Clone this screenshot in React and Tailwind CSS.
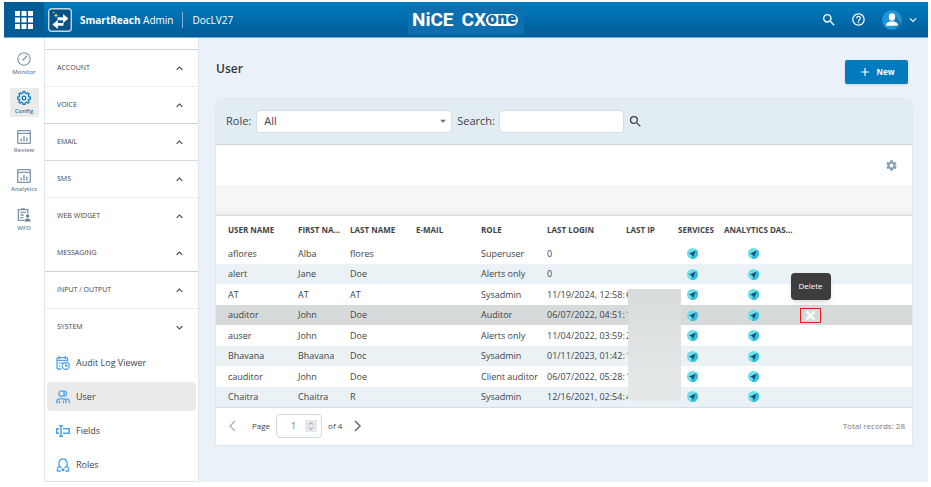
import { useState } from "react";
import {
  MdSearch,
  MdHelpOutline,
  MdSettings,
  MdArrowDropDown,
  MdExpandMore,
  MdExpandLess,
  MdAdd,
} from "react-icons/md";

const sections = [
  { name: "ACCOUNT", line: "border-[#c9d6dc]" },
  { name: "VOICE", line: "border-[#eeeeee]" },
  { name: "EMAIL", line: "border-[#c9d6dc]" },
  { name: "SMS", line: "border-[#d3e0e4]" },
  { name: "WEB WIDGET", line: "border-[#eeeeee]" },
  { name: "MESSAGING", line: "border-white" },
  { name: "INPUT / OUTPUT", line: "border-[#c5d0d8]" },
  { name: "SYSTEM", line: "border-[#eeeeee]", open: true },
];

const users = [
  { user: "aflores", first: "Alba", last: "flores", role: "Superuser", login: "0", ip: "" },
  { user: "alert", first: "Jane", last: "Doe", role: "Alerts only", login: "0", ip: "" },
  { user: "AT", first: "AT", last: "AT", role: "Sysadmin", login: "11/19/2024, 12:58:1", ip: "6" },
  { user: "auditor", first: "John", last: "Doe", role: "Auditor", login: "06/07/2022, 04:51:2", ip: "1" },
  { user: "auser", first: "John", last: "Doe", role: "Alerts only", login: "11/04/2022, 03:59:0", ip: "2" },
  { user: "Bhavana", first: "Bhavana", last: "Doc", role: "Sysadmin", login: "01/11/2023, 01:42:0", ip: "1" },
  { user: "cauditor", first: "John", last: "Doe", role: "Client auditor", login: "06/07/2022, 05:28:1", ip: "1" },
  { user: "Chaitra", first: "Chaitra", last: "R", role: "Sysadmin", login: "12/16/2021, 02:54:4", ip: "4" },
];

function AppsIcon() {
  return (
    <svg width="18" height="18" viewBox="0 0 18 18" fill="#fff">
      {[0, 6.5, 13].map((y) =>
        [0, 6.5, 13].map((x) => (
          <rect key={`${x}-${y}`} x={x} y={y} width="5" height="5" />
        ))
      )}
    </svg>
  );
}

function SmartReachIcon() {
  return (
    <svg width="24" height="24" viewBox="0 0 24 24">
      <rect x="0.7" y="0.7" width="22.6" height="22.6" rx="3" fill="#0b5384" stroke="#bcd7e8" strokeWidth="1.4" />
      <path d="M9.500 9.200h5.500V6l5.400 4.600-5.400 4.600v-3H9.500z" fill="#fff" />
      <path d="M15.500 17.800H9.800V21L4.400 16.400 9.800 12v3h5.700z" fill="#fff" />
      <path d="M8 5l.7 1.700 1.700.7-1.700.7L8 9.800l-.7-1.700-1.700-.7 1.700-.7z" fill="#f0d84a" />
      <circle cx="5.600" cy="4.500" r=".8" fill="#f0d84a" />
    </svg>
  );
}

function MonitorIcon() {
  return (
    <svg width="14" height="14" viewBox="0 0 14 14" fill="none" stroke="#8195a3" strokeWidth="1.1">
      <circle cx="7" cy="7" r="6.2" />
      <path d="M6.2 7.8l3.4-3.6" strokeWidth="1.3" strokeLinecap="round" />
      <circle cx="6.2" cy="7.8" r=".8" fill="#8195a3" stroke="none" />
      <path d="M7 2.4v1M2.4 7h1M10.6 7h1M3.8 3.8l.6.6" strokeWidth=".7" />
    </svg>
  );
}

// eight teeth, each one given by its two base and two tip corners
const gearPoints = Array.from({ length: 8 }, (_, i) =>
  [
    [-15, 8.4],
    [-9, 11],
    [9, 11],
    [15, 8.4],
  ].map(([offset, radius]) => {
    const angle = ((i * 45 + offset) * Math.PI) / 180;
    return `${12 + radius * Math.cos(angle)},${12 + radius * Math.sin(angle)}`;
  })
)
  .flat()
  .join(" ");

function ConfigIcon() {
  return (
    <svg width="14" height="14" viewBox="0 0 24 24" fill="none" stroke="#0d7fc0" strokeWidth="2.2" strokeLinejoin="round">
      <polygon points={gearPoints} />
      <circle cx="12" cy="12" r="3.200" />
    </svg>
  );
}

function ReportIcon() {
  return (
    <svg width="14" height="14" viewBox="0 0 14 14" fill="none" stroke="#7f95a8" strokeWidth="1.3">
      <rect x=".7" y=".7" width="12.6" height="12.6" rx=".6" />
      <path d="M.6 3.400h12.800" />
      <path d="M4.200 11.400V8.600M7 11.400V6M9.800 11.400V7.600" strokeWidth="1.400" />
    </svg>
  );
}

function WfoIcon() {
  return (
    <svg width="14" height="14" viewBox="0 0 14 14" fill="none" stroke="#7f95a8" strokeWidth="1.3">
      <path d="M7.4 12.4H1.4V1.6h9.4v4" />
      <path d="M3.4 4.4h5.4M3.4 7h3.4M3.4 9.6h3M4.2.8h3.8" />
      <circle cx="10.6" cy="8" r="1.8" fill="#6d8599" stroke="none" />
      <path d="M7.6 13.6c0-2.4 1.2-3 3-3s3 .6 3 3z" fill="#6d8599" stroke="none" />
    </svg>
  );
}

function AuditIcon() {
  return (
    <svg width="14" height="14" viewBox="0 0 14 14" fill="none" stroke="#4da3ec" strokeWidth="1.3" strokeLinecap="round">
      <path d="M5 13H2a1 1 0 0 1-1-1V2.600a1 1 0 0 1 1-1h8.600a1 1 0 0 1 1 1v2.200M1 4.400h10.600M3.400.6v2M9.200.6v2M3.200 7h.6M3.200 9.800h.6M5.600 7h1" />
      <circle cx="9.800" cy="9.800" r="3.500" />
      <path d="M9.800 8v2h1.400" />
    </svg>
  );
}

function UsersIcon() {
  return (
    <svg width="14" height="14" viewBox="0 0 14 14" fill="none" stroke="#4da3ec" strokeWidth="1.3" strokeLinecap="round">
      <circle cx="5.600" cy="3.600" r="2.700" />
      <path d="M8.600 1a2.700 2.700 0 0 1 0 5.200M.8 12.800v-1.400c0-1.800 1.400-2.600 3-2.600h3.200c1.600 0 3 .8 3 2.600v1.400M3.400 12.800v-1.600M7.400 12.800v-1.600M10.600 8.800c1.700.1 2.800 1 2.800 2.600v1.200" />
    </svg>
  );
}

function FieldsIcon() {
  return (
    <svg width="14" height="12" viewBox="0 0 14 12" fill="none" stroke="#4da3ec" strokeWidth="1.5">
      <path d="M5 .8v10.400M3 .8h4M3 11.200h4M3.200 3.800H.8v4.400h2.400M7 3.800h6.200v4.400H7" />
    </svg>
  );
}

function RolesIcon() {
  return (
    <svg width="14" height="14" viewBox="0 0 14 14" fill="none" stroke="#4da3ec" strokeWidth="1.3" strokeLinecap="round" strokeLinejoin="round">
      <path d="M4.200 13H1.400c-.4-2.600 0-3.800 2.200-4.800C2.200 6.400 2.600.8 7 .8s4.800 5.600 3.400 7.400c2.200 1 2.600 2.200 2.200 4.800H9.800M3.600 8.200l1.600 1.600M10.400 8.200L8.800 9.800" />
      <path d="M7 9.800l.6 1.200 1.300.2-.9.9.2 1.300L7 12.800l-1.200.6.2-1.300-.9-.9 1.300-.2z" fill="#3a93e0" stroke="none" />
    </svg>
  );
}

function AvatarIcon() {
  return (
    <svg width="20" height="20" viewBox="0 0 20 20">
      <circle cx="10" cy="10" r="10" fill="#2394d4" />
      <path d="M12.600 5.500L19.400 12.500A10 10 0 0 1 15.500 18.300L12 16z" fill="#1479b8" />
      <ellipse cx="10" cy="7" rx="3.200" ry="3.700" fill="#fff" />
      <path d="M4 15.800c0-3 2.200-3.800 4.200-4.200h3.600c2 .4 4.200 1.200 4.200 4.200z" fill="#fff" />
    </svg>
  );
}

function PlaneIcon() {
  return (
    <svg className="block" width="11" height="11" viewBox="0 0 11 11">
      <circle cx="5.500" cy="5.500" r="5.500" fill="#6be0ea" />
      <path d="M9.400 1.600A5.500 5.500 0 0 1 4 10.800L5 6z" fill="#35c0d8" />
      <path d="M8.600 2.400L1.900 5.800l2.500.6L6 9z" fill="#17497f" />
    </svg>
  );
}

const railItems = [
  { name: "Monitor", Icon: MonitorIcon },
  { name: "Config", Icon: ConfigIcon },
  { name: "Review", Icon: ReportIcon },
  { name: "Analytics", Icon: ReportIcon },
  { name: "WFO", Icon: WfoIcon },
];

const systemLinks = [
  { name: "Audit Log Viewer", Icon: AuditIcon },
  { name: "User", Icon: UsersIcon },
  { name: "Fields", Icon: FieldsIcon },
  { name: "Roles", Icon: RolesIcon },
];

function Header() {
  return (
    <header className="flex h-9 items-center border-b border-[#6fa9cf] bg-linear-to-b from-[#007cbe] to-[#005c99] text-white">
      <div className="flex h-full flex-1 items-center">
        <button className="flex h-full w-10 items-center justify-center bg-[#005b97]" aria-label="Applications">
          <AppsIcon />
        </button>
        <div className="pl-1">
          <SmartReachIcon />
        </div>
        <p className="ml-2 text-[10px] leading-4">
          <strong className="font-bold">SmartReach</strong> Admin
        </p>
        <span className="mx-[9px] h-4 w-px bg-[#7fb4d6]" />
        <p className="text-[10px] leading-4">DocLV27</p>
      </div>
      <div className="flex h-7 w-[116px] items-center bg-[#0f6fae] pl-1 font-['Roboto',sans-serif] text-[19px] leading-none font-bold">
        <span>NiCE</span>
        <span className="ml-2">CX</span>
        <span className="flex h-3 w-8 items-center justify-center rounded-full bg-white font-['Open_Sans',sans-serif] text-[15px] leading-3 font-extrabold text-[#0a69a8]">
          <span className="pb-[3px]">one</span>
        </span>
      </div>
      <div className="flex flex-1 items-center justify-end">
        <button aria-label="Search">
          <MdSearch size={16} />
        </button>
        <button className="ml-3.5" aria-label="Help">
          <MdHelpOutline size={15} />
        </button>
        <button className="mr-2 ml-4 flex items-center gap-1" aria-label="Account">
          <AvatarIcon />
          <MdExpandMore size={14} />
        </button>
      </div>
    </header>
  );
}

function Rail() {
  return (
    <nav className="flex w-10 shrink-0 flex-col items-center gap-2.5 pt-[11px]">
      {railItems.map(({ name, Icon }) => (
        <a
          key={name}
          href="#"
          className={
            name === "Config"
              ? "flex h-[29px] w-[29px] flex-col items-center justify-between rounded-xs bg-[#ebebeb] pt-[3px] pb-[2px] text-[6px] leading-[8px] font-semibold text-[#0d7fc0]"
              : "flex h-[29px] w-[29px] flex-col items-center justify-between pt-[3px] pb-[2px] text-[6px] leading-[8px] font-semibold text-[#6f869c]"
          }
        >
          <Icon />
          {name}
        </a>
      ))}
    </nav>
  );
}

function Sidebar() {
  return (
    <nav className="w-[155px] shrink-0 border-x border-b border-[#dfe5e9] bg-white pt-[11px] text-[#3f4347]">
      {sections.map((section) => (
        <button
          key={section.name}
          className={`flex h-[37px] w-full items-center justify-between border-t pr-3 pl-3 text-[7px] ${section.line}`}
        >
          {section.name}
          {section.open ? <MdExpandMore size={13} /> : <MdExpandLess size={13} />}
        </button>
      ))}
      <ul className="flex flex-col gap-[5px] px-0.5 pt-[3px] pb-0.5">
        {systemLinks.map(({ name, Icon }) => (
          <li key={name}>
            <a
              href="#"
              className={
                name === "User"
                  ? "flex h-[29px] items-center gap-[6px] rounded-sm bg-[#eaeaea] pl-[9px] text-[9px]"
                  : "flex h-[29px] items-center gap-[6px] pl-[9px] text-[9px]"
              }
            >
              <Icon />
              {name}
            </a>
          </li>
        ))}
      </ul>
    </nav>
  );
}

function Filters() {
  return (
    <form className="flex h-[46px] items-center rounded-t-lg border-b border-[#c8d6dd] bg-[#e2edf3] pl-2.5 text-[11px] text-[#3f4347]">
      <label htmlFor="role">Role:</label>
      <div className="relative ml-[5px]">
        <select
          id="role"
          className="h-[23px] w-[196px] appearance-none rounded-sm border border-[#d5e0e6] bg-white pl-[7px] text-[11px]"
        >
          <option>All</option>
        </select>
        <MdArrowDropDown size={14} className="pointer-events-none absolute top-1 right-0.5 text-[#6b7075]" />
      </div>
      <label htmlFor="search" className="ml-[5px]">
        Search:
      </label>
      <input
        id="search"
        type="text"
        className="ml-1 h-[23px] w-[125px] rounded-sm border border-[#d5e0e6] bg-white px-1"
      />
      <button type="button" className="ml-1" aria-label="Run search">
        <MdSearch size={15} />
      </button>
    </form>
  );
}

function UserRow({ row, selected }) {
  return (
    <tr
      className={
        selected
          ? "bg-[#d7dadb] odd:h-[21px] even:h-5"
          : "odd:h-[21px] odd:bg-white even:h-5 even:bg-[#eaf2f6]"
      }
    >
      <td className="pl-3">{row.user}</td>
      <td>{row.first}</td>
      <td>{row.last}</td>
      <td></td>
      <td className="whitespace-nowrap">{row.role}</td>
      <td>
        <div className="w-[78px] overflow-hidden whitespace-nowrap">{row.login}</div>
      </td>
      <td className="relative">
        {row.ip}
        {row.user === "AT" && (
          <div className="absolute top-[5px] left-0.5 z-10 h-28 w-[53px] bg-linear-to-b from-[#d9dcdc] to-[#e5e9ea]" />
        )}
      </td>
      <td className="pl-[9px]">
        <PlaneIcon />
      </td>
      <td className="pl-6">
        <PlaneIcon />
      </td>
      <td>
        {selected && (
          <button
            className="relative ml-0.5 flex h-[15px] w-[21px] items-center justify-center border border-[#f01818] text-white"
            aria-label="Delete user"
          >
            <svg width="11" height="11" viewBox="0 0 11 11" stroke="currentColor" strokeWidth="2.400">
              <path d="M1.500 1.500l8 8M9.500 1.500l-8 8" />
            </svg>
            <span
              role="tooltip"
              className="absolute bottom-[22px] left-1/2 flex h-[27px] w-10 -translate-x-1/2 items-center justify-center rounded-sm bg-[#3d3d3d] text-[8px] shadow-md"
            >
              Delete
            </span>
          </button>
        )}
      </td>
    </tr>
  );
}

function UserTable() {
  return (
    <table className="w-full table-fixed border-b border-[#d3e0e6] bg-white text-left text-[9px] leading-4 text-[#404448]">
      <colgroup>
        <col className="w-[82px]" />
        <col className="w-[52px]" />
        <col className="w-[66px]" />
        <col className="w-[65px]" />
        <col className="w-[66px]" />
        <col className="w-[79px]" />
        <col className="w-[52px]" />
        <col className="w-[46px]" />
        <col className="w-[74px]" />
        <col />
      </colgroup>
      <thead>
        <tr className="h-[27px] text-[8px] whitespace-nowrap">
          <th className="pl-3 font-bold">USER NAME</th>
          <th className="font-bold">FIRST NA...</th>
          <th className="font-bold">LAST NAME</th>
          <th className="font-bold">E-MAIL</th>
          <th className="font-bold">ROLE</th>
          <th className="font-bold">LAST LOGIN</th>
          <th className="font-bold">LAST IP</th>
          <th className="font-bold">SERVICES</th>
          <th className="font-bold">ANALYTICS DAS...</th>
          <th></th>
        </tr>
      </thead>
      <tbody>
        {users.map((row) => (
          <UserRow key={row.user} row={row} selected={row.user === "auditor"} />
        ))}
      </tbody>
    </table>
  );
}

function Pagination() {
  const [page, setPage] = useState(1);

  return (
    <div className="flex h-[37px] items-center bg-white pr-[7px] pl-3 text-[8px] text-[#404448]">
      <button aria-label="Previous page" onClick={() => setPage(Math.max(1, page - 1))}>
        <svg width="9" height="12" viewBox="0 0 9 12" fill="none" stroke="#a9adb0" strokeWidth="1.2">
          <path d="M7 1L2 6l5 5" />
        </svg>
      </button>
      <label htmlFor="page" className="ml-[15px]">
        Page
      </label>
      <div className="ml-[6px] flex h-6 w-[46px] items-center justify-between rounded-sm border border-[#ccd9e6] pr-1">
        <input
          id="page"
          type="text"
          inputMode="numeric"
          value={page}
          onChange={(e) => setPage(Number(e.target.value) || 1)}
          className="w-6 pl-3.5 text-[9px] text-[#5b7286] outline-none"
        />
        <svg width="12" height="12" viewBox="0 0 12 12" fill="none" stroke="#8b8f94">
          <rect width="12" height="12" fill="#e8e8ec" stroke="none" />
          <path d="M4 4.500l2-2 2 2M4 7.500l2 2 2-2" />
        </svg>
      </div>
      <span className="ml-[6px]">of 4</span>
      <button className="ml-[11px]" aria-label="Next page" onClick={() => setPage(Math.min(4, page + 1))}>
        <svg width="9" height="12" viewBox="0 0 9 12" fill="none" stroke="#6b6f73" strokeWidth="1.600">
          <path d="M2 1l5 5-5 5" />
        </svg>
      </button>
      <span className="ml-auto text-[#777b7f]">Total records: 28</span>
    </div>
  );
}

export default function App() {
  return (
    <div className="bg-white pt-0.5 pr-[3px] pb-[5px] pl-1 font-['Open_Sans','Noto_Sans',sans-serif]">
      <Header />
      <div className="flex">
        <Rail />
        <Sidebar />
        <main className="min-w-0 flex-1 bg-[#eaf1f9] pr-4 pl-[17px]">
          <div className="flex items-start justify-between pt-[22px] pr-1">
            <h1 className="text-[12px] leading-[18px] font-semibold text-[#33373b]">User</h1>
            <button className="flex h-6 w-[63px] items-center justify-center gap-1 rounded-xs bg-[#007cbe] text-[8px] font-bold text-white shadow-sm">
              <MdAdd size={14} />
              New
            </button>
          </div>
          <section className="mt-[15px] rounded-t-lg shadow-[0_0_2px_rgba(120,145,170,0.35)]">
            <Filters />
            <div className="flex h-10 items-center justify-end bg-white pr-3.5">
              <button aria-label="Table settings">
                <MdSettings size={13} className="text-[#839db3]" />
              </button>
            </div>
            <div className="h-[31px] border-b border-[#dcdcdc] bg-linear-to-b from-[#f6f6f6] from-80% to-[#ececec]" />
            <UserTable />
            <Pagination />
          </section>
        </main>
      </div>
    </div>
  );
}
